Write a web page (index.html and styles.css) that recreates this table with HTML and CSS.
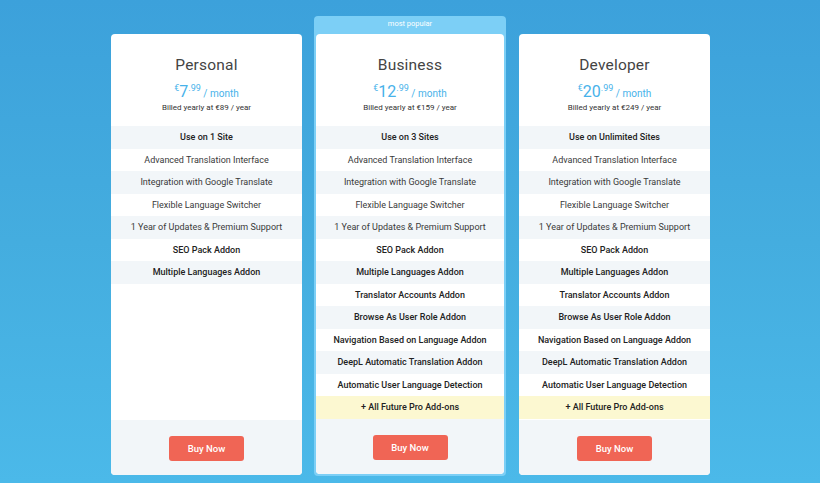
FILE: index.html
```html
<!DOCTYPE html>
<html>
<head>
<meta charset="utf-8">
<link rel="stylesheet" href="styles.css">
</head>
<body>
<div class="plans">
  <div class="plan">
    <div class="card">
      <div class="head">
        <h2 class="title">Personal</h2>
        <div class="price"><sup class="cur">€</sup><span class="amt">7</span><sup class="cents">.99</sup><span class="per"> / month</span></div>
        <div class="billed">Billed yearly at €89 / year</div>
      </div>
      <ul class="features">
        <li class="b">Use on 1 Site</li>
        <li>Advanced Translation Interface</li>
        <li>Integration with Google Translate</li>
        <li>Flexible Language Switcher</li>
        <li>1 Year of Updates &amp; Premium Support</li>
        <li class="b">SEO Pack Addon</li>
        <li class="b">Multiple Languages Addon</li>
      </ul>
      <div class="foot"><button class="buy">Buy Now</button></div>
    </div>
  </div>

  <div class="plan popular">
    <div class="badge">most popular</div>
    <div class="card">
      <div class="head">
        <h2 class="title">Business</h2>
        <div class="price"><sup class="cur">€</sup><span class="amt">12</span><sup class="cents">.99</sup><span class="per"> / month</span></div>
        <div class="billed">Billed yearly at €159 / year</div>
      </div>
      <ul class="features">
        <li class="b">Use on 3 Sites</li>
        <li>Advanced Translation Interface</li>
        <li>Integration with Google Translate</li>
        <li>Flexible Language Switcher</li>
        <li>1 Year of Updates &amp; Premium Support</li>
        <li class="b">SEO Pack Addon</li>
        <li class="b">Multiple Languages Addon</li>
        <li class="b">Translator Accounts Addon</li>
        <li class="b">Browse As User Role Addon</li>
        <li class="b">Navigation Based on Language Addon</li>
        <li class="b">DeepL Automatic Translation Addon</li>
        <li class="b">Automatic User Language Detection</li>
        <li class="b future">+ All Future Pro Add-ons</li>
      </ul>
      <div class="foot"><button class="buy">Buy Now</button></div>
    </div>
  </div>

  <div class="plan">
    <div class="card">
      <div class="head">
        <h2 class="title">Developer</h2>
        <div class="price"><sup class="cur">€</sup><span class="amt">20</span><sup class="cents">.99</sup><span class="per"> / month</span></div>
        <div class="billed">Billed yearly at €249 / year</div>
      </div>
      <ul class="features">
        <li class="b">Use on Unlimited Sites</li>
        <li>Advanced Translation Interface</li>
        <li>Integration with Google Translate</li>
        <li>Flexible Language Switcher</li>
        <li>1 Year of Updates &amp; Premium Support</li>
        <li class="b">SEO Pack Addon</li>
        <li class="b">Multiple Languages Addon</li>
        <li class="b">Translator Accounts Addon</li>
        <li class="b">Browse As User Role Addon</li>
        <li class="b">Navigation Based on Language Addon</li>
        <li class="b">DeepL Automatic Translation Addon</li>
        <li class="b">Automatic User Language Detection</li>
        <li class="b future">+ All Future Pro Add-ons</li>
      </ul>
      <div class="foot"><button class="buy">Buy Now</button></div>
    </div>
  </div>
</div>
</body>
</html>
```
FILE: styles.css
```css
* { box-sizing: border-box; }
html, body { margin: 0; padding: 0; }
body {
  width: 820px;
  height: 483px;
  overflow: hidden;
  background: linear-gradient(180deg, #3ca1db 0%, #44addf 50%, #4bb9e9 100%);
  font-family: Roboto, "Liberation Sans", Arial, sans-serif;
  color: #333;
}
.plans {
  display: flex;
  justify-content: center;
  align-items: stretch;
  gap: 12px;
  padding-top: 16px;
  padding-left: 1px;
}
.plan {
  width: 191px;
  display: flex;
  flex-direction: column;
}
.plan:not(.popular) { padding-top: 18px; padding-bottom: 1px; }
.plan:not(.popular) .card { flex: 1; }
.popular {
  width: 192px;
  background: #7ccff6;
  border-radius: 4px;
  padding: 0 2px 2px;
  margin-right: 1px;
}
.badge {
  height: 18px;
  line-height: 16px;
  text-align: center;
  font-size: 7.5px;
  color: #fff;
}
.card {
  background: #fff;
  border-radius: 4px;
  display: flex;
  flex-direction: column;
  overflow: hidden;
}
.head {
  height: 92px;
  text-align: center;
  padding-top: 21px;
}
.title {
  margin: 0;
  font-size: 15.5px;
  font-weight: 400;
  color: #444;
  line-height: 20px;
  letter-spacing: 0.2px;
}
.price {
  margin-top: 4px;
  color: #47b2ea;
  line-height: 18px;
  height: 18px;
}
.cur { font-size: 9px; vertical-align: 6px; }
.amt { font-size: 16px; }
.cents { font-size: 9px; vertical-align: 6px; }
.per { font-size: 10px; }
.billed {
  margin-top: 5px;
  font-size: 8px;
  color: #333;
  line-height: 12px;
}
.features {
  list-style: none;
  margin: 0;
  padding: 0;
  flex: 1;
}
.features li {
  height: 22.5px;
  line-height: 22.5px;
  text-align: center;
  font-size: 9px;
  color: #3a3a3a;
  white-space: nowrap;
}
.features li:nth-child(odd) { background: #f2f6f9; }
.features li.b { font-weight: 500; color: #222; }
.features li.future { background: #fcf8d1; }
.foot {
  height: 55px;
  background: #f2f6f9;
  display: flex;
  justify-content: center;
  padding-top: 16px;
}
.buy {
  width: 75px;
  height: 25px;
  border: none;
  border-radius: 3px;
  background: #f06555;
  color: #fff;
  font-family: Roboto, "Liberation Sans", Arial, sans-serif;
  font-size: 9.5px;
  font-weight: 500;
  padding: 0;
}
```
